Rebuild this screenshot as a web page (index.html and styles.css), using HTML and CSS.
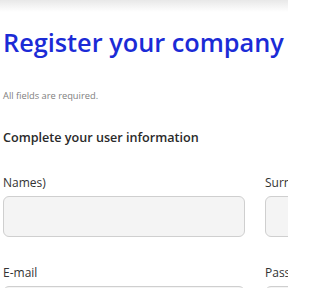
FILE: index.html
```html
<!DOCTYPE html>
<html>
<head>
<meta charset="utf-8">
<link rel="stylesheet" href="styles.css">
</head>
<body>
<div class="topbar"></div>
<main class="page">
  <h1 class="title">Register your company</h1>
  <p class="note">All fields are required.</p>
  <h2 class="section">Complete your user information</h2>
  <div class="grid">
    <label class="field"><span class="label">Names)</span><span class="input"></span></label>
    <label class="field"><span class="label">Surnames</span><span class="input"></span></label>
    <label class="field"><span class="label">E-mail</span><span class="input"></span></label>
    <label class="field"><span class="label">Password</span><span class="input"></span></label>
  </div>
</main>
</body>
</html>
```
FILE: styles.css
```css
html, body {
  margin: 0;
  padding: 0;
  background: #fff;
  overflow: hidden;
}
body {
  width: 288px;
  height: 288px;
  font-family: "Open Sans", "Noto Sans", sans-serif;
}
.topbar {
  height: 12px;
  background: linear-gradient(#e8e8e8, #ffffff);
}
.page {
  padding-left: 3px;
  width: 285px;
  height: 276px;
  overflow: hidden;
}
.title {
  margin: 15px 0 0 0;
  font-size: 25.3px;
  line-height: 30px;
  font-weight: 600;
  color: #1b2bd6;
  white-space: nowrap;
}
.note {
  margin: 33px 0 0 0;
  font-size: 9.3px;
  line-height: 12px;
  color: #808080;
}
.section {
  margin: 27px 0 0 0;
  font-size: 12.6px;
  line-height: 18px;
  font-weight: 600;
  color: #2a2a2a;
  white-space: nowrap;
}
.grid {
  display: grid;
  grid-template-columns: 242px 242px;
  column-gap: 20px;
  row-gap: 28px;
  margin-top: 28px;
}
.field {
  display: flex;
  flex-direction: column;
  gap: 5px;
}
.label {
  font-size: 12px;
  line-height: 16px;
  color: #333;
  white-space: nowrap;
}
.input {
  display: block;
  height: 39px;
  border: 1px solid #cfcfcf;
  border-radius: 6px;
  background: #f4f4f4;
}
```
